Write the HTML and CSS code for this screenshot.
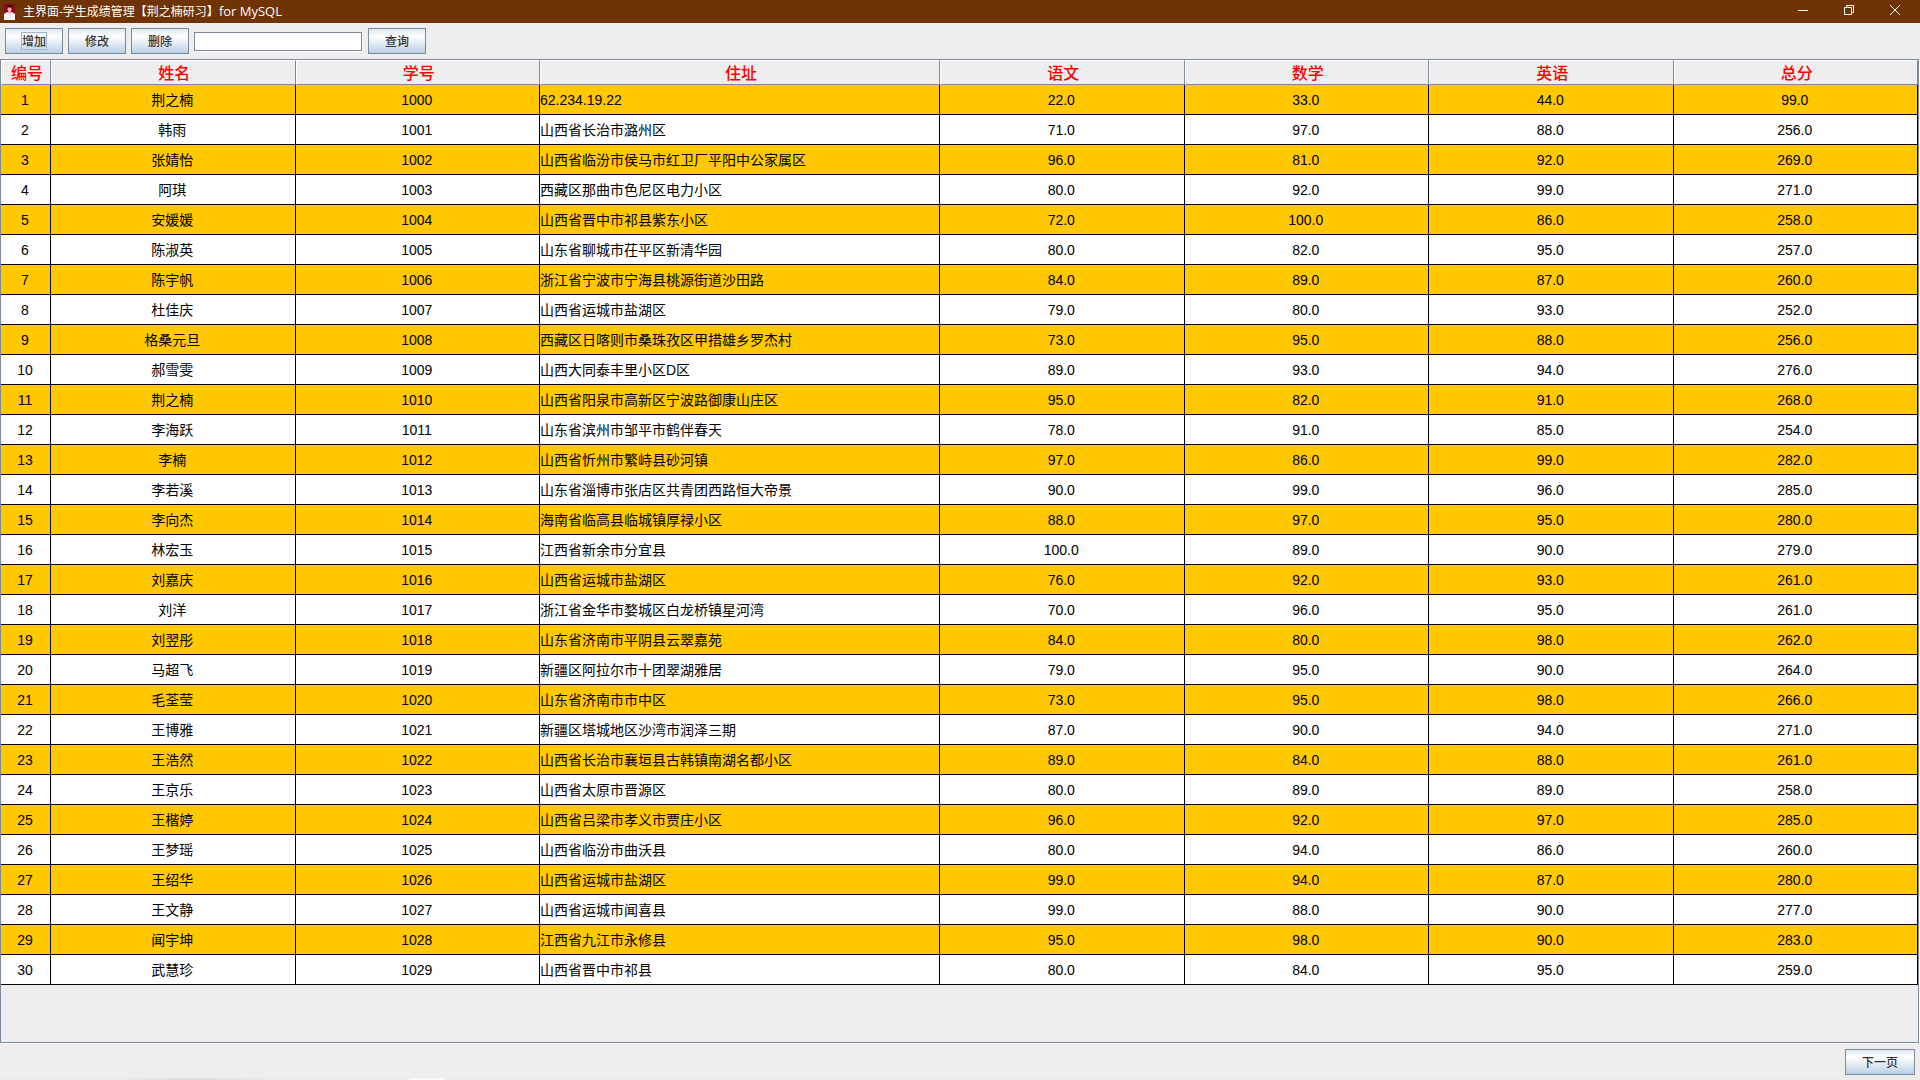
FILE: index.html
```html
<!DOCTYPE html>
<html lang="zh-CN">
<head>
  <meta charset="UTF-8" />
  <meta name="viewport" content="width=device-width, initial-scale=1.0" />
  <title>主界面-学生成绩管理</title>
  <link rel="stylesheet" href="styles.css">
</head>
<body>

  <!-- Title bar -->
  <header class="titlebar">
    <svg class="app-icon" width="11" height="16" viewBox="0 0 11 16" aria-hidden="true">
      <rect width="11" height="16" fill="#8a0818" />
      <path d="M0 16V10.500Q0 9 4 8h3q4 1 4 2.500V16z" fill="#f4f2f5" />
      <path d="M4.500 6h2v3l-1 1.500-1-1.500z" fill="#d9a48e" />
      <ellipse cx="5.500" cy="5" rx="2" ry="3" fill="#e3b5a2" />
      <path d="M3.500 4.500Q2.500 1 5.500 1t2 3.500L7 3.500H4z" fill="#1c1014" />
    </svg>
    <h1 class="title">主界面-学生成绩管理【荆之楠研习】<span class="title-latin">for MySQL</span></h1>
    <div class="window-buttons">
      <button type="button" class="win-btn" aria-label="最小化">
        <svg width="10" height="10" viewBox="0 0 10 10"><path d="M0 5.500h10" /></svg>
      </button>
      <button type="button" class="win-btn" aria-label="还原">
        <svg width="10" height="10" viewBox="0 0 10 10"><path d="M.5 2.500h7v7h-7zM2.500 2.500v-2h7v7h-2" /></svg>
      </button>
      <button type="button" class="win-btn" aria-label="关闭">
        <svg width="10" height="10" viewBox="0 0 10 10"><path d="M0 0l10 10M10 0L0 10" /></svg>
      </button>
    </div>
  </header>

  <!-- Toolbar -->
  <form class="toolbar" id="searchForm">
    <button type="button" class="btn"><span class="focus-ring">增加</span></button>
    <button type="button" class="btn">修改</button>
    <button type="button" class="btn">删除</button>
    <input type="text" class="search" id="keyword" aria-label="查询内容" />
    <button type="submit" class="btn">查询</button>
  </form>

  <!-- Score table -->
  <main class="table-panel">
    <table class="score-table">
      <colgroup>
        <col class="col-no">
        <col>
        <col>
        <col class="col-address">
        <col>
        <col>
        <col>
        <col>
      </colgroup>
      <thead>
        <tr>
          <th>编号</th>
          <th>姓名</th>
          <th>学号</th>
          <th>住址</th>
          <th>语文</th>
          <th>数学</th>
          <th>英语</th>
          <th>总分</th>
        </tr>
      </thead>
      <tbody id="rows"></tbody>
    </table>
  </main>

  <!-- Paging -->
  <footer class="pager">
    <button type="button" class="btn btn-next">下一页</button>
  </footer>

  <script>
    // name, address, chinese, maths, english
    const students = [
      ["荆之楠", "62.234.19.22", 22, 33, 44],
      ["韩雨", "山西省长治市潞州区", 71, 97, 88],
      ["张婧怡", "山西省临汾市侯马市红卫厂平阳中公家属区", 96, 81, 92],
      ["阿琪", "西藏区那曲市色尼区电力小区", 80, 92, 99],
      ["安媛媛", "山西省晋中市祁县紫东小区", 72, 100, 86],
      ["陈淑英", "山东省聊城市茌平区新清华园", 80, 82, 95],
      ["陈宇帆", "浙江省宁波市宁海县桃源街道沙田路", 84, 89, 87],
      ["杜佳庆", "山西省运城市盐湖区", 79, 80, 93],
      ["格桑元旦", "西藏区日喀则市桑珠孜区甲措雄乡罗杰村", 73, 95, 88],
      ["郝雪雯", "山西大同泰丰里小区D区", 89, 93, 94],
      ["荆之楠", "山西省阳泉市高新区宁波路御康山庄区", 95, 82, 91],
      ["李海跃", "山东省滨州市邹平市鹤伴春天", 78, 91, 85],
      ["李楠", "山西省忻州市繁峙县砂河镇", 97, 86, 99],
      ["李若溪", "山东省淄博市张店区共青团西路恒大帝景", 90, 99, 96],
      ["李向杰", "海南省临高县临城镇厚禄小区", 88, 97, 95],
      ["林宏玉", "江西省新余市分宜县", 100, 89, 90],
      ["刘嘉庆", "山西省运城市盐湖区", 76, 92, 93],
      ["刘洋", "浙江省金华市婺城区白龙桥镇星河湾", 70, 96, 95],
      ["刘翌彤", "山东省济南市平阴县云翠嘉苑", 84, 80, 98],
      ["马超飞", "新疆区阿拉尔市十团翠湖雅居", 79, 95, 90],
      ["毛荃莹", "山东省济南市市中区", 73, 95, 98],
      ["王博雅", "新疆区塔城地区沙湾市润泽三期", 87, 90, 94],
      ["王浩然", "山西省长治市襄垣县古韩镇南湖名都小区", 89, 84, 88],
      ["王京乐", "山西省太原市晋源区", 80, 89, 89],
      ["王楷婷", "山西省吕梁市孝义市贾庄小区", 96, 92, 97],
      ["王梦瑶", "山西省临汾市曲沃县", 80, 94, 86],
      ["王绍华", "山西省运城市盐湖区", 99, 94, 87],
      ["王文静", "山西省运城市闻喜县", 99, 88, 90],
      ["闻宇坤", "江西省九江市永修县", 95, 98, 90],
      ["武慧珍", "山西省晋中市祁县", 80, 84, 95]
    ];

    // Build the table rows
    document.getElementById("rows").innerHTML = students.map(function (s, i) {
      const total = s[2] + s[3] + s[4];
      return `
        <tr>
          <td>${i + 1}</td>
          <td>${s[0]}</td>
          <td>${1000 + i}</td>
          <td class="address">${s[1]}</td>
          <td>${s[2].toFixed(1)}</td>
          <td>${s[3].toFixed(1)}</td>
          <td>${s[4].toFixed(1)}</td>
          <td>${total.toFixed(1)}</td>
        </tr>
      `;
    }).join("");

    document.getElementById("searchForm").addEventListener("submit", function (e) {
      e.preventDefault();
    });
  </script>

</body>
</html>
```
FILE: styles.css
```css
* {
  box-sizing: border-box;
}

body {
  display: flex;
  flex-direction: column;
  min-height: 100vh;
  margin: 0;
  background-color: #eee;
  color: #000;
  font-family: "Liberation Sans", "Noto Sans CJK SC", sans-serif;
  font-size: 14px;
}

/* Title bar */
.titlebar {
  display: flex;
  align-items: center;
  height: 23px;
  padding: 0 2px 0 4px;
  background-color: #703303;
  color: #fff;
}

.title {
  flex: 1;
  margin: 0 0 0 8px;
  font-family: "Open Sans", "Noto Sans CJK SC", sans-serif;
  font-size: 12px;
  font-weight: normal;
  line-height: 22px;
}

.title-latin {
  font-size: 13px;
}

.window-buttons {
  display: flex;
  height: 100%;
}

.win-btn {
  display: flex;
  align-items: center;
  justify-content: center;
  width: 46px;
  padding: 0 0 3px;
  border: none;
  background: none;
}

.win-btn svg {
  fill: none;
  stroke: #fff;
}

/* Toolbar */
.toolbar {
  display: flex;
  align-items: center;
  gap: 5px;
  height: 36px;
  padding: 0 5px;
}

.btn {
  display: flex;
  align-items: center;
  justify-content: center;
  width: 58px;
  height: 26px;
  padding: 0;
  border: 1px solid #7a8a99;
  background: linear-gradient(#dde8f3, #fff 30%, #dde8f3 65%, #b8cfe5);
  color: #333;
  font-family: "Noto Sans CJK SC", sans-serif;
  font-size: 12px;
  font-weight: 500;
  line-height: 16px;
}

.focus-ring {
  border: 1px solid #a3b8cc;
}

.search {
  width: 168px;
  height: 19px;
  margin-right: 1px;
  padding: 0 2px;
  border: 1px solid #7a8a99;
  box-shadow: 1px 1px #fff;
  background-color: #fff;
  font: inherit;
  outline: none;
}

/* Table */
.table-panel {
  flex: 1;
  margin: 0 1px 1px 0;
  border: 1px solid #7a8a99;
  box-shadow: 1px 1px #fff;
}

.score-table {
  width: 100%;
  table-layout: fixed;
  border-spacing: 0;
}

.col-no {
  width: 50px;
}

.col-address {
  width: 400px;
}

.score-table th {
  height: 25px;
  padding: 2px 0 0 2px;
  border: 1px solid #7a8a99;
  border-top-color: #fff;
  border-left-color: #fff;
  color: #f00;
  font-size: 16px;
  font-weight: 500;
  line-height: 21px;
}

.score-table td {
  height: 30px;
  padding: 0 1px 0 0;
  border-right: 1px solid #000;
  border-bottom: 1px solid #000;
  background-color: #fff;
  line-height: 20px;
  text-align: center;
}

.score-table tr:nth-child(odd) td {
  background-color: #ffc800;
}

.score-table .address {
  text-align: left;
}

/* Paging */
.pager {
  display: flex;
  align-items: center;
  justify-content: flex-end;
  height: 36px;
  padding: 0 5px;
  /* top edge of the taskbar under the window */
  background: linear-gradient(90deg, #ebebeb 120px, #dcdcdc 190px, #ebebeb 270px, #ebebeb 409px, #fafafa 409px, #fafafa 445px, #ebebeb 445px) bottom / 100% 2px no-repeat;
}

.btn-next {
  width: 70px;
}
```
